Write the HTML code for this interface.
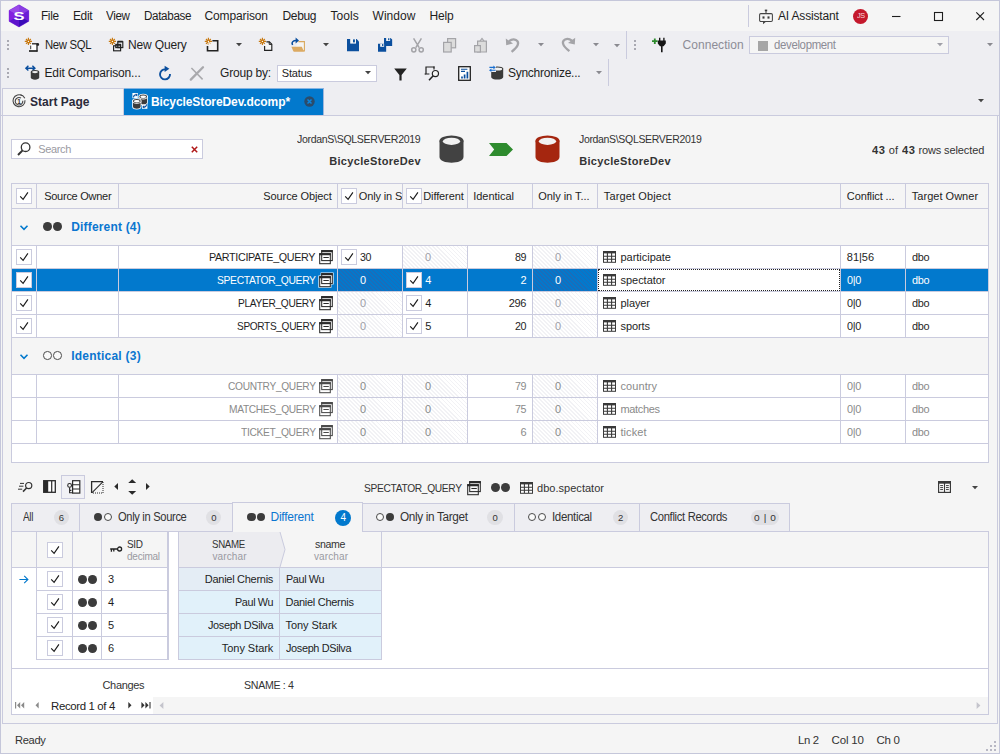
<!DOCTYPE html>
<html lang="en"><head><meta charset="utf-8"><title>BicycleStoreDev.dcomp - dbForge</title>
<style>
html,body{margin:0;padding:0;}
body{width:1000px;height:754px;position:relative;overflow:hidden;background:#f5f5f5;
font-family:"Liberation Sans",sans-serif;font-size:12px;}
body>div,body>svg,body>span{position:absolute;box-sizing:border-box;}
.t{white-space:pre;display:block;}
svg{overflow:visible;}
</style></head>
<body>
<div style="left:0px;top:0px;width:1000px;height:754px;background:#f5f5f5;border:1px solid #c5c7da;"></div>
<div style="left:1px;top:1px;width:998px;height:30px;background:#f5f5f5;"></div>
<div style="left:1px;top:31px;width:998px;height:85px;background:#eeeef2;"></div>
<svg style="left:8px;top:4px;" width="22" height="24" viewBox="0 0 22 24"><g transform="translate(-8 -4)">
<path d="M19 4.8 L28.8 10.4 V21.3 L19 27 L9 21.3 V10.4 Z" fill="#7426da"/><path d="M19 4.8 L9 10.4 L19 16 Z" fill="#9a48e8"/><path d="M19 4.8 L28.8 10.4 L19 16 Z" fill="#8a3ee2"/>
<path d="M9 10.4 L9 21.3 L19 16 Z" fill="#8420e0"/><path d="M28.8 10.4 L28.8 21.3 L19 16 Z" fill="#6a1cd6"/>
<path d="M9 21.3 L19 27 L19 16 Z" fill="#5c12cc"/><path d="M28.8 21.3 L19 27 L19 16 Z" fill="#3a0cb8"/>
<path d="M19 4.8 L28.8 10.4 V21.3 L19 27 L9 21.3 V10.4 Z" fill="none" stroke="#7a2adc" stroke-width=".6" opacity=".6"/>
<text x="0" y="0" font-size="11.6" font-weight="700" fill="#fff" text-anchor="middle" transform="translate(19 20.2) scale(1.42 1)" font-family="Liberation Sans, sans-serif">S</text></g></svg>
<span class="t" style="top:8px;font-size:12px;line-height:16px;color:#1e1e1e;letter-spacing:-0.35px;left:41.2px;transform:scaleX(0.984);transform-origin:0 50%;">File</span>
<span class="t" style="top:8px;font-size:12px;line-height:16px;color:#1e1e1e;letter-spacing:-0.35px;left:72.5px;transform:scaleX(0.993);transform-origin:0 50%;">Edit</span>
<span class="t" style="top:8px;font-size:12px;line-height:16px;color:#1e1e1e;letter-spacing:-0.35px;left:105.5px;transform:scaleX(0.970);transform-origin:0 50%;">View</span>
<span class="t" style="top:8px;font-size:12px;line-height:16px;color:#1e1e1e;letter-spacing:-0.35px;left:143.8px;transform:scaleX(0.971);transform-origin:0 50%;">Database</span>
<span class="t" style="top:8px;font-size:12px;line-height:16px;color:#1e1e1e;letter-spacing:-0.13px;left:204.5px;">Comparison</span>
<span class="t" style="top:8px;font-size:12px;line-height:16px;color:#1e1e1e;letter-spacing:-0.34px;left:282.5px;">Debug</span>
<span class="t" style="top:8px;font-size:12px;line-height:16px;color:#1e1e1e;letter-spacing:0.05px;left:330.5px;">Tools</span>
<span class="t" style="top:8px;font-size:12px;line-height:16px;color:#1e1e1e;letter-spacing:0.06px;left:372.5px;">Window</span>
<span class="t" style="top:8px;font-size:12px;line-height:16px;color:#1e1e1e;letter-spacing:-0.16px;left:429.5px;">Help</span>
<div style="left:748px;top:5px;width:1px;height:22px;background:#cacbde;"></div>
<svg style="left:758px;top:9px;" width="16" height="15" viewBox="0 0 16 15"><g fill="none" stroke="#444" stroke-width="1.05">
<rect x="1.6" y="4.6" width="12.8" height="7.8" rx="1.2"/>
<path d="M8 4.6 V1.2 M5.5 12.4 L5.5 14.2 L7.6 12.4"/></g>
<rect x="4.5" y="7.4" width="2" height="2.2" fill="#3a3a3a"/><rect x="9.5" y="7.4" width="2" height="2.2" fill="#3a3a3a"/>
<rect x="6.8" y="0.6" width="2.4" height="1.6" fill="#3a3a3a"/></svg>
<span class="t" style="top:8px;font-size:12px;line-height:16px;color:#1e1e1e;letter-spacing:-0.17px;left:778.0px;">AI Assistant</span>
<div style="left:853.3px;top:8.6px;width:15.2px;height:15.2px;background:#c4182c;border-radius:50%;"></div>
<span class="t" style="top:8.3px;font-size:8px;line-height:16px;color:#f6d6da;letter-spacing:-0.35px;left:856.9px;transform:scaleX(0.912);transform-origin:0 50%;">JS</span>
<svg style="left:890px;top:8px;" width="100" height="16" viewBox="0 0 100 16"><g stroke="#1e1e1e" stroke-width="1.1" fill="none">
<path d="M2 8.5 H10.5"/><rect x="44.5" y="4.5" width="8" height="8"/>
<path d="M86.3 4.3 L94 12 M94 4.3 L86.3 12"/></g></svg>
<div style="left:7px;top:40px;width:2px;height:2px;background:#a9a9b2;"></div>
<div style="left:7px;top:44px;width:2px;height:2px;background:#a9a9b2;"></div>
<div style="left:7px;top:48px;width:2px;height:2px;background:#a9a9b2;"></div>
<div style="left:7px;top:68px;width:2px;height:2px;background:#a9a9b2;"></div>
<div style="left:7px;top:72px;width:2px;height:2px;background:#a9a9b2;"></div>
<div style="left:7px;top:76px;width:2px;height:2px;background:#a9a9b2;"></div>
<svg style="left:25px;top:37px;" width="15" height="16" viewBox="0 0 15 16"><g stroke="#c8780f" stroke-width="1.15" stroke-linecap="butt"><path d="M3.4 0.8 V8 M-0.2 4.4 H7 M1 2 L5.8 6.8 M5.8 2 L1 6.8"/></g><circle cx="3.4" cy="4.4" r="0.65" fill="#fff"/><path d="M5.6 7 H12 V14.4 H5.6 Z" fill="#fff"/>
<path d="M7 6.8 H13.2" stroke="#222" stroke-width="1.3"/><rect x="11.6" y="6.2" width="2.5" height="2.5" rx=".8" fill="#222"/>
<path d="M12 7 V14.4" stroke="#222" stroke-width="1.3"/><path d="M4 14 H12.6" stroke="#222" stroke-width="1.7"/>
<path d="M5.7 8.6 V12.2" stroke="#222" stroke-width=".9"/></svg>
<span class="t" style="top:37px;font-size:12px;line-height:16px;color:#1e1e1e;letter-spacing:-0.35px;left:44.5px;transform:scaleX(0.944);transform-origin:0 50%;">New SQL</span>
<svg style="left:109px;top:37px;" width="15" height="16" viewBox="0 0 15 16"><g stroke="#c8780f" stroke-width="1.15" stroke-linecap="butt"><path d="M3.4 0.8 V8 M-0.2 4.4 H7 M1 2 L5.8 6.8 M5.8 2 L1 6.8"/></g><circle cx="3.4" cy="4.4" r="0.65" fill="#fff"/><g fill="none" stroke="#222" stroke-width="1.15"><rect x="8.8" y="4.8" width="5" height="5.8"/><rect x="6.8" y="7.4" width="4.8" height="3.2"/><rect x="4.6" y="8.8" width="7" height="5"/></g>
<path d="M8.6 4.5 H13.8" stroke="#222" stroke-width="1.5"/></svg>
<span class="t" style="top:37px;font-size:12px;line-height:16px;color:#1e1e1e;letter-spacing:-0.15px;left:128.0px;">New Query</span>
<svg style="left:204.5px;top:37px;" width="15" height="16" viewBox="0 0 15 16"><g stroke="#c8780f" stroke-width="1.15" stroke-linecap="butt"><path d="M3.4 0.8 V8 M-0.2 4.4 H7 M1 2 L5.8 6.8 M5.8 2 L1 6.8"/></g><circle cx="3.4" cy="4.4" r="0.65" fill="#fff"/><rect x="3" y="5" width="10" height="9" fill="#f5f5f5" opacity=".6"/><path d="M7.4 3.8 H12.7 V13.8 H2.5 V9" fill="none" stroke="#222" stroke-width="1.6"/></svg>
<svg style="left:235.8px;top:43px;" width="6" height="4" viewBox="0 0 6 4"><path d="M0 0 H6 L3 3.2 Z" fill="#444"/></svg>
<svg style="left:259px;top:37px;" width="15" height="16" viewBox="0 0 15 16"><g stroke="#c8780f" stroke-width="1.15" stroke-linecap="butt"><path d="M3.4 0.8 V8 M-0.2 4.4 H7 M1 2 L5.8 6.8 M5.8 2 L1 6.8"/></g><circle cx="3.4" cy="4.4" r="0.65" fill="#fff"/><path d="M7.4 4.8 H10.4 L12.8 7.2 V13.4 H5.6 V9" fill="#f5f5f5" stroke="#222" stroke-width="1.15"/><path d="M10.2 4.8 V7.4 H12.8" fill="none" stroke="#222" stroke-width="1"/></svg>
<svg style="left:291px;top:37px;" width="15" height="16" viewBox="0 0 15 16"><path d="M7.4 4.6 H13.4 V13.9 H3" fill="#f5f5f5" stroke="#d9a85e" stroke-width="1.1"/>
<path d="M0.4 9.8 H10.8 L13 14.4 H2.4 Z" fill="#dcaa62"/>
<path d="M1.6 8 C0 5 2.6 3.2 6 3.6" fill="none" stroke="#0b4f9e" stroke-width="1.5"/><path d="M4.6 0.6 L8 3.6 L4.6 6.4 Z" fill="#0b4f9e"/></svg>
<svg style="left:322.5px;top:43px;" width="6" height="4" viewBox="0 0 6 4"><path d="M0 0 H6 L3 3.2 Z" fill="#444"/></svg>
<svg style="left:347px;top:38.8px;" width="12" height="12.2" viewBox="0 0 12 12.2"><path d="M0 0 H9.6 L12 2.4 V12.2 H0 Z" fill="#0b4f9e"/><rect x="3.2" y="0" width="5.8" height="4.6" fill="#f5f5f5"/><rect x="6" y="0.4" width="1.9" height="3" fill="#0b4f9e"/></svg>
<svg style="left:378px;top:38px;" width="15" height="14" viewBox="0 0 15 14"><g transform="translate(6 0) scale(.68 .65)"><path d="M0 0 H9.6 L12 2.4 V12.2 H0 Z" fill="#0b4f9e"/><rect x="3.2" y="0" width="5.8" height="4.6" fill="#f5f5f5"/><rect x="6" y="0.4" width="1.9" height="3" fill="#0b4f9e"/></g><g transform="translate(0 5.8) scale(.68 .65)"><path d="M0 0 H9.6 L12 2.4 V12.2 H0 Z" fill="#0b4f9e"/><rect x="3.2" y="0" width="5.8" height="4.6" fill="#f5f5f5"/><rect x="6" y="0.4" width="1.9" height="3" fill="#0b4f9e"/></g></svg>
<svg style="left:410.5px;top:37.5px;" width="13" height="15" viewBox="0 0 13 15"><g fill="none" stroke="#a4a4a8" stroke-width="1.5"><path d="M2.6 0.4 L8.2 9.6 M10.4 0.4 L4.8 9.6"/><circle cx="2.8" cy="11.8" r="2.1"/><circle cx="10.2" cy="11.8" r="2.1"/></g></svg>
<svg style="left:442.5px;top:38px;" width="14" height="15" viewBox="0 0 14 15"><g fill="#dcdcdc" stroke="#a4a4a8" stroke-width="1.2"><rect x="4.6" y="0.6" width="8" height="9.2"/><rect x="0.6" y="4.4" width="7.6" height="9.6"/></g></svg>
<svg style="left:473.5px;top:37px;" width="14" height="16" viewBox="0 0 14 16"><g fill="#dcdcdc" stroke="#a4a4a8" stroke-width="1.2"><path d="M3.6 4.2 H12.4 V15 H3.6 Z"/><path d="M6 4 L8 1.4 L10 4" fill="none"/><rect x="0.6" y="8.6" width="5.8" height="6.4"/></g></svg>
<svg style="left:505px;top:37.5px;" width="15" height="15" viewBox="0 0 15 15"><path d="M4 3.2 C9 -0.6 14.6 2.6 12.6 7.2 C11.6 9.6 9 11.8 6.6 13.8" fill="none" stroke="#a4a4a8" stroke-width="2.3"/><path d="M0.8 0.4 L1.2 7.2 L8 5.6 Z" fill="#a4a4a8"/></svg>
<svg style="left:537.5px;top:43px;" width="6" height="4" viewBox="0 0 6 4"><path d="M0 0 H6 L3 3.2 Z" fill="#8a8a90"/></svg>
<svg style="left:561px;top:37px;" width="15" height="15" viewBox="0 0 15 15"><path d="M11 3.6 C6 -0.2 0.4 3 2.4 7.6 C3.4 10 6 12.2 8.4 14.2" fill="none" stroke="#a4a4a8" stroke-width="2.3"/><path d="M14.2 0.8 L13.8 7.6 L7 6 Z" fill="#a4a4a8"/></svg>
<svg style="left:592.8px;top:43px;" width="6" height="4" viewBox="0 0 6 4"><path d="M0 0 H6 L3 3.2 Z" fill="#8a8a90"/></svg>
<svg style="left:614px;top:44px;" width="6" height="4" viewBox="0 0 6 4"><path d="M0 0 H6 L3 3.2 Z" fill="#8a8a90"/></svg>
<div style="left:626px;top:31px;width:1px;height:28px;background:#cacbde;"></div>
<div style="left:634px;top:40px;width:2px;height:2px;background:#a9a9b2;"></div>
<div style="left:634px;top:44px;width:2px;height:2px;background:#a9a9b2;"></div>
<div style="left:634px;top:48px;width:2px;height:2px;background:#a9a9b2;"></div>
<svg style="left:652px;top:37px;" width="15" height="16" viewBox="0 0 15 16"><path d="M2.8 1.4 V7 M0 4.2 H5.6" stroke="#2e8b2e" stroke-width="1.8"/>
<path d="M7.7 0.8 V4 M11.9 0.8 V4" stroke="#161616" stroke-width="1.35"/><path d="M5.8 3.5 H13.8 V6.4 L11.6 9.2 H10.6 V15.2 H9 V9.2 H8 L5.8 6.4 Z" fill="#161616"/></svg>
<span class="t" style="top:37px;font-size:12px;line-height:16px;color:#8c8c96;letter-spacing:0.05px;left:682.5px;">Connection</span>
<div style="left:749px;top:36px;width:200px;height:18px;background:#f5f5f5;border:1px solid #cacbde;"></div>
<div style="left:757.5px;top:41px;width:10px;height:10px;background:#a6a6a6;"></div>
<span class="t" style="top:37px;font-size:12px;line-height:16px;color:#8c8c96;letter-spacing:-0.35px;left:773.8px;transform:scaleX(0.951);transform-origin:0 50%;">development</span>
<svg style="left:937px;top:43px;" width="6" height="4" viewBox="0 0 6 4"><path d="M0 0 H6 L3 3.2 Z" fill="#a0a0a8"/></svg>
<svg style="left:987px;top:43px;" width="6" height="4" viewBox="0 0 6 4"><path d="M0 0 H6 L3 3.2 Z" fill="#8a8a90"/></svg>
<svg style="left:25px;top:65px;" width="15" height="16" viewBox="0 0 15 16"><path d="M1.2 3.2 H9.6 M3.4 0.8 L0.9 3.2 L3.4 5.6 M7.4 0.8 L9.9 3.2 L7.4 5.6" fill="none" stroke="#0b4f9e" stroke-width="1.45"/>
<path d="M5.8 6.8 V12.6 C5.8 15.4 14.2 15.4 14.2 12.6 V6.8 Z" fill="#3a3a3a"/><ellipse cx="10" cy="6.9" rx="4.2" ry="2" fill="#3a3a3a"/><ellipse cx="10" cy="7.1" rx="3" ry="1.15" fill="#f0f0f0"/></svg>
<span class="t" style="top:65px;font-size:12px;line-height:16px;color:#1e1e1e;letter-spacing:-0.14px;left:44.5px;">Edit Comparison...</span>
<svg style="left:158px;top:65px;" width="14" height="16" viewBox="0 0 14 16"><path d="M7.6 4.4 A5 5 0 1 0 12 9" fill="none" stroke="#0b4f9e" stroke-width="1.9"/><path d="M6.6 0.8 L11.4 3.8 L6.6 7 Z" fill="#0b4f9e"/></svg>
<svg style="left:189px;top:66px;" width="15" height="15" viewBox="0 0 15 15"><path d="M2.4 2 L13.6 13.4" stroke="#a8a8ac" stroke-width="1.5"/><path d="M14 1.2 L1.8 13.6" stroke="#a8a8ac" stroke-width="2.3" stroke-linecap="round"/></svg>
<span class="t" style="top:65px;font-size:12px;line-height:16px;color:#1e1e1e;letter-spacing:-0.19px;left:220.0px;">Group by:</span>
<div style="left:277px;top:65px;width:100px;height:17px;background:#fff;border:1px solid #cacbde;"></div>
<span class="t" style="top:65px;font-size:11px;line-height:16px;color:#1e1e1e;letter-spacing:-0.18px;left:281.8px;">Status</span>
<svg style="left:365px;top:71px;" width="6" height="4" viewBox="0 0 6 4"><path d="M0 0 H6 L3 3.2 Z" fill="#444"/></svg>
<svg style="left:393.5px;top:67.5px;" width="13" height="13" viewBox="0 0 13 13"><path d="M0.2 0.6 H12.8 L7.6 7 V12.6 H5.4 V7 Z" fill="#222"/></svg>
<svg style="left:424px;top:65.5px;" width="16" height="15" viewBox="0 0 16 15"><path d="M6.4 1 H2 V8 H5.4 M10 3.6 V1 H6.4" fill="none" stroke="#222" stroke-width="1.2"/><path d="M2 8 H0.6 M9.4 1 H10.6" stroke="#222" stroke-width="1.2"/><circle cx="11.4" cy="7.6" r="3.1" fill="#f5f5f5" stroke="#222" stroke-width="1.2"/><path d="M9.2 9.8 L5 14.2" stroke="#222" stroke-width="1.5"/></svg>
<svg style="left:457.5px;top:65.5px;" width="13" height="15" viewBox="0 0 13 15"><rect x="0.7" y="0.7" width="11.6" height="13.6" fill="#fff" stroke="#222" stroke-width="1.3"/><path d="M3 3.2 H9.4 M3 5.4 H7" stroke="#0b4f9e" stroke-width="1.1"/><path d="M4 12.6 V10.6 M6.6 12.6 V8.6 M9.4 12.6 V5.8" stroke="#0b4f9e" stroke-width="1.7"/></svg>
<svg style="left:489px;top:65px;" width="15" height="16" viewBox="0 0 15 16"><path d="M2.2 3.6 V12 C2.2 15.4 14.2 15.4 14.2 12 V3.6 Z" fill="#3a3a3a"/><ellipse cx="8.2" cy="3.8" rx="6" ry="2.4" fill="#3a3a3a"/><ellipse cx="8.6" cy="4" rx="4.6" ry="1.5" fill="#f0f0f0"/>
<rect x="-0.6" y="0.6" width="7.6" height="6.4" fill="#eeeef2"/><path d="M0.4 2.4 H5 M2 5.2 H6.6" stroke="#1a6fd0" stroke-width="1.1"/><path d="M6.8 2.4 L4.4 0.6 V4.2 Z M0 5.2 L2.4 3.4 V7 Z" fill="#1a6fd0"/></svg>
<span class="t" style="top:65px;font-size:12px;line-height:16px;color:#1e1e1e;letter-spacing:-0.27px;left:508.0px;">Synchronize...</span>
<svg style="left:596px;top:71px;" width="6" height="4" viewBox="0 0 6 4"><path d="M0 0 H6 L3 3.2 Z" fill="#8a8a90"/></svg>
<div style="left:608px;top:59px;width:1px;height:27px;background:#cacbde;"></div>
<div style="left:1px;top:115px;width:998px;height:1px;background:#cacbde;"></div>
<div style="left:2px;top:88px;width:122px;height:28px;background:#f5f5f5;border:1px solid #cacbde;border-bottom:none;"></div>
<svg style="left:12px;top:94px;" width="14" height="14" viewBox="0 0 14 14"><g fill="none" stroke="#444" stroke-width="1.1"><path d="M10.6 1.9 A6 6 0 1 0 13 6.2"/><path d="M9 4 A3.8 3.8 0 1 0 10.8 6.8"/><path d="M8.4 0.8 A6.4 6.4 0 0 1 12.8 4.2"/></g>
<text x="7" y="9.6" font-size="6.5" font-weight="700" text-anchor="middle" fill="#333" font-family="Liberation Sans, sans-serif">1</text></svg>
<span class="t" style="top:94px;font-size:12px;line-height:16px;color:#2a2a3a;font-weight:700;letter-spacing:0.02px;left:30.0px;">Start Page</span>
<div style="left:124px;top:88px;width:200px;height:28px;background:#0279cd;border-top:1px solid #86b4e2;border-right:1px solid #9fb6dc;"></div>
<svg style="left:132px;top:92px;" width="16" height="18" viewBox="0 0 16 18"><rect x="0.4" y="1" width="5.4" height="5.2" fill="#fff"/><rect x="10" y="11.6" width="5.4" height="5.2" fill="#fff"/>
<g transform="translate(7.4 2.4)"><path d="M0 2.2 V8 C0 10.6 7.6 10.6 7.6 8 V2.2 Z" fill="#3c3c3c" stroke="#fff" stroke-width="1.6" paint-order="stroke"/><ellipse cx="3.8" cy="2.2" rx="3.8" ry="2" fill="#3c3c3c" stroke="#fff" stroke-width="1.6" paint-order="stroke"/><ellipse cx="3.8" cy="2.4" rx="2.9" ry="1.2" fill="#fff"/></g><g transform="translate(1 6.8)"><path d="M0 2.2 V8 C0 10.6 7.6 10.6 7.6 8 V2.2 Z" fill="#3c3c3c" stroke="#fff" stroke-width="1.6" paint-order="stroke"/><ellipse cx="3.8" cy="2.2" rx="3.8" ry="2" fill="#3c3c3c" stroke="#fff" stroke-width="1.6" paint-order="stroke"/><ellipse cx="3.8" cy="2.4" rx="2.9" ry="1.2" fill="#fff"/></g>
<path d="M1.6 5.4 C1.4 3.4 3 2.6 4.4 2.8" fill="none" stroke="#0b4f9e" stroke-width="1.2"/><path d="M3.8 1.2 L5.8 2.9 L3.8 4.6 Z" fill="#0b4f9e"/>
<path d="M14.4 12.4 C14.6 14.4 13 15.2 11.6 15" fill="none" stroke="#0b4f9e" stroke-width="1.2"/><path d="M12.2 16.6 L10.2 14.9 L12.2 13.2 Z" fill="#0b4f9e"/></svg>
<span class="t" style="top:94px;font-size:12px;line-height:16px;color:#fff;font-weight:700;letter-spacing:-0.10px;left:151.0px;">BicycleStoreDev.dcomp*</span>
<svg style="left:303.5px;top:96.4px;" width="11" height="11" viewBox="0 0 11 11"><circle cx="5.5" cy="5.5" r="5.2" fill="#2b4c6b"/><path d="M3.5 3.5 L7.5 7.5 M7.5 3.5 L3.5 7.5" stroke="#0a86e0" stroke-width="1.5"/></svg>
<svg style="left:978px;top:99px;" width="6" height="4" viewBox="0 0 6 4"><path d="M0 0 H6 L3 3.2 Z" fill="#444"/></svg>
<div style="left:2px;top:115px;width:996px;height:609px;background:#f5f5f5;border:1px solid #cacbde;"></div>
<div style="left:11px;top:139px;width:192px;height:20px;background:#fff;border:1px solid #cacbde;"></div>
<svg style="left:16.5px;top:142px;" width="14" height="14" viewBox="0 0 14 14"><circle cx="8.6" cy="5.2" r="4.3" fill="none" stroke="#333" stroke-width="1.3"/><path d="M5.6 8.4 L1 13" stroke="#333" stroke-width="2"/></svg>
<span class="t" style="top:141px;font-size:11px;line-height:16px;color:#9a9aa2;letter-spacing:-0.35px;left:38.2px;">Search</span>
<svg style="left:190.5px;top:145.5px;" width="7" height="7" viewBox="0 0 7 7"><path d="M0.8 0.8 L6.2 6.2 M6.2 0.8 L0.8 6.2" stroke="#b01818" stroke-width="1.5"/></svg>
<span class="t" style="top:131px;font-size:11px;line-height:16px;color:#333;letter-spacing:-0.35px;left:296.8px;transform:scaleX(0.962);transform-origin:0 50%;">JordanS\SQLSERVER2019</span>
<span class="t" style="top:153px;font-size:11px;line-height:16px;color:#333;font-weight:700;letter-spacing:0.33px;left:329.2px;">BicycleStoreDev</span>
<span class="t" style="top:131px;font-size:11px;line-height:16px;color:#333;letter-spacing:-0.35px;left:579.2px;transform:scaleX(0.955);transform-origin:0 50%;">JordanS\SQLSERVER2019</span>
<span class="t" style="top:153px;font-size:11px;line-height:16px;color:#333;font-weight:700;letter-spacing:0.33px;left:579.2px;">BicycleStoreDev</span>
<svg style="left:439.2px;top:135px;" width="25" height="28" viewBox="0 0 25 28"><path d="M0.5 5.5 V22 C0.5 29.6 24.5 29.6 24.5 22 V5.5 Z" fill="#424242"/>
<ellipse cx="12.5" cy="6" rx="12" ry="5.6" fill="#424242"/><ellipse cx="12.5" cy="6.3" rx="8.6" ry="3.6" fill="#f1f1f1"/></svg>
<svg style="left:535.3px;top:135px;" width="25" height="28" viewBox="0 0 25 28"><path d="M0.5 5.5 V22 C0.5 29.6 24.5 29.6 24.5 22 V5.5 Z" fill="#a5260f"/>
<ellipse cx="12.5" cy="6" rx="12" ry="5.6" fill="#a5260f"/><ellipse cx="12.5" cy="6.3" rx="8.6" ry="3.6" fill="#f1f1f1"/></svg>
<svg style="left:489.3px;top:142.5px;" width="24" height="13" viewBox="0 0 24 13"><path d="M0 0 H17.5 L24 6.5 L17.5 13 H0 L5.2 6.5 Z" fill="#2e8b2e"/></svg>
<span class="t" style="top:142px;font-size:11px;line-height:16px;color:#333;font-weight:700;letter-spacing:0.60px;left:872.0px;transform:scaleX(1.012);transform-origin:0 50%;">43</span>
<span class="t" style="top:142px;font-size:11px;line-height:16px;color:#333;letter-spacing:0.21px;left:888.8px;">of</span>
<span class="t" style="top:142px;font-size:11px;line-height:16px;color:#333;font-weight:700;letter-spacing:0.60px;left:902.4px;transform:scaleX(1.012);transform-origin:0 50%;">43</span>
<span class="t" style="top:142px;font-size:11px;line-height:16px;color:#333;letter-spacing:-0.11px;left:918.4px;">rows selected</span>
<div style="left:11px;top:183px;width:978px;height:280px;background:#fff;border:1px solid #cacbde;"></div>
<div style="left:12px;top:184px;width:976px;height:24px;background:#f5f5f5;"></div>
<div style="left:36px;top:184px;width:1px;height:25px;background:#cacbde;"></div>
<div style="left:118px;top:184px;width:1px;height:25px;background:#cacbde;"></div>
<div style="left:337px;top:184px;width:1px;height:25px;background:#cacbde;"></div>
<div style="left:402px;top:184px;width:1px;height:25px;background:#cacbde;"></div>
<div style="left:467px;top:184px;width:1px;height:25px;background:#cacbde;"></div>
<div style="left:532px;top:184px;width:1px;height:25px;background:#cacbde;"></div>
<div style="left:597px;top:184px;width:1px;height:25px;background:#cacbde;"></div>
<div style="left:840px;top:184px;width:1px;height:25px;background:#cacbde;"></div>
<div style="left:905px;top:184px;width:1px;height:25px;background:#cacbde;"></div>
<div style="left:11px;top:208px;width:978px;height:1px;background:#cacbde;"></div>
<div style="left:16px;top:188px;width:16px;height:16px;background:#fff;border:1px solid #cacbde;"></div>
<svg style="left:19px;top:192px;" width="10" height="9" viewBox="0 0 10 9"><path d="M1.2 4.3 L4.1 7.3 L8.9 0.4" fill="none" stroke="#1a1a1a" stroke-width="1.15"/></svg>
<span class="t" style="top:188px;font-size:11px;line-height:16px;color:#1e1e1e;letter-spacing:-0.26px;left:44.2px;">Source Owner</span>
<span class="t" style="top:188px;font-size:11px;line-height:16px;color:#1e1e1e;letter-spacing:-0.10px;left:263.3px;">Source Object</span>
<div style="left:341px;top:188px;width:16px;height:16px;background:#fff;border:1px solid #cacbde;"></div>
<svg style="left:344px;top:192px;" width="10" height="9" viewBox="0 0 10 9"><path d="M1.2 4.3 L4.1 7.3 L8.9 0.4" fill="none" stroke="#1a1a1a" stroke-width="1.15"/></svg>
<div style="left:358px;top:186px;width:44px;height:20px;overflow:hidden;"><span class="t" style="position:absolute;left:0.8px;top:2px;line-height:16px;font-size:11px;color:#1e1e1e;letter-spacing:-0.15px">Only in Source</span></div>
<div style="left:406px;top:188px;width:16px;height:16px;background:#fff;border:1px solid #cacbde;"></div>
<svg style="left:409px;top:192px;" width="10" height="9" viewBox="0 0 10 9"><path d="M1.2 4.3 L4.1 7.3 L8.9 0.4" fill="none" stroke="#1a1a1a" stroke-width="1.15"/></svg>
<div style="left:422px;top:186px;width:45px;height:20px;overflow:hidden;"><span class="t" style="position:absolute;left:1.2px;top:2px;line-height:16px;font-size:11px;color:#1e1e1e;letter-spacing:-0.1px">Different</span></div>
<span class="t" style="top:188px;font-size:11px;line-height:16px;color:#1e1e1e;letter-spacing:-0.02px;left:473.2px;">Identical</span>
<span class="t" style="top:188px;font-size:11px;line-height:16px;color:#1e1e1e;letter-spacing:-0.04px;left:538.2px;">Only in T...</span>
<span class="t" style="top:188px;font-size:11px;line-height:16px;color:#1e1e1e;letter-spacing:0.13px;left:603.8px;">Target Object</span>
<span class="t" style="top:188px;font-size:11px;line-height:16px;color:#1e1e1e;letter-spacing:-0.11px;left:846.8px;">Conflict ...</span>
<span class="t" style="top:188px;font-size:11px;line-height:16px;color:#1e1e1e;letter-spacing:0.02px;left:911.8px;">Target Owner</span>
<div style="left:12px;top:209px;width:976px;height:36px;background:#f5f5f5;"></div>
<div style="left:11px;top:245px;width:978px;height:1px;background:#cacbde;"></div>
<svg style="left:20.3px;top:224.8px;" width="8" height="6" viewBox="0 0 8 6"><path d="M0.5 0.7 L4 4.4 L7.5 0.7" fill="none" stroke="#0279cd" stroke-width="1.55"/></svg>
<div style="left:43.1px;top:222.2px;width:8.8px;height:8.8px;background:#3c3c3c;border-radius:50%;"></div>
<div style="left:52.9px;top:222.2px;width:8.8px;height:8.8px;background:#3c3c3c;border-radius:50%;"></div>
<span class="t" style="top:218.7px;font-size:12px;line-height:16px;color:#0b76d0;font-weight:700;letter-spacing:0.18px;left:71.2px;">Different (4)</span>
<div style="left:11px;top:268px;width:978px;height:1px;background:#cacbde;"></div>
<div style="left:16px;top:249px;width:16px;height:16px;background:#fff;border:1px solid #cacbde;"></div>
<svg style="left:19px;top:253px;" width="10" height="9" viewBox="0 0 10 9"><path d="M1.2 4.3 L4.1 7.3 L8.9 0.4" fill="none" stroke="#1a1a1a" stroke-width="1.15"/></svg>
<span class="t" style="top:249px;font-size:11px;line-height:16px;color:#1e1e1e;letter-spacing:-0.35px;left:209.0px;transform:scaleX(0.978);transform-origin:0 50%;">PARTICIPATE_QUERY</span>
<svg style="left:319px;top:250px;" width="14" height="14" viewBox="0 0 14 14"><g fill="none" stroke="#2a2a2a" stroke-width="1.05"><rect x="2.7" y="0.6" width="10.6" height="10"/><rect x="0.7" y="3.7" width="10.6" height="10"/></g><path d="M2.2 1.2 H13.8 M0.2 4.3 H11.8" stroke="#2a2a2a" stroke-width="1.9"/><path d="M4.4 7.5 H9.8" stroke="#2a2a2a" stroke-width="1"/></svg>
<div style="left:341px;top:249px;width:16px;height:16px;background:#fff;border:1px solid #cacbde;"></div>
<svg style="left:344px;top:253px;" width="10" height="9" viewBox="0 0 10 9"><path d="M1.2 4.3 L4.1 7.3 L8.9 0.4" fill="none" stroke="#1a1a1a" stroke-width="1.15"/></svg>
<span class="t" style="top:249px;font-size:11px;line-height:16px;color:#1e1e1e;letter-spacing:-0.35px;left:360.3px;transform:scaleX(0.966);transform-origin:0 50%;">30</span>
<div style="left:403px;top:246px;width:64px;height:22px;background:repeating-linear-gradient(45deg,#fff 0,#fff 2.1px,#f2f2f5 2.1px,#f2f2f5 2.83px);"></div>
<span class="t" style="top:249px;font-size:11px;line-height:16px;color:#a0a0a8;left:425.0px;">0</span>
<span class="t" style="top:249px;font-size:11px;line-height:16px;color:#1e1e1e;letter-spacing:-0.35px;left:514.9px;transform:scaleX(0.975);transform-origin:0 50%;">89</span>
<div style="left:533px;top:246px;width:64px;height:22px;background:repeating-linear-gradient(45deg,#fff 0,#fff 2.1px,#f2f2f5 2.1px,#f2f2f5 2.83px);"></div>
<span class="t" style="top:249px;font-size:11px;line-height:16px;color:#a0a0a8;left:555.0px;">0</span>
<svg style="left:603px;top:251.2px;" width="13" height="12" viewBox="0 0 13 12"><rect x="0.5" y="0.5" width="12" height="10.8" fill="#fff" stroke="#3a3a3a" stroke-width="1"/><path d="M0 1.3 H13" stroke="#3a3a3a" stroke-width="2.2"/><path d="M0.5 5.2 H12.5 M0.5 8.2 H12.5 M4.4 1 V11 M8.6 1 V11" stroke="#3a3a3a" stroke-width="1.1"/></svg>
<span class="t" style="top:249px;font-size:11px;line-height:16px;color:#1e1e1e;letter-spacing:-0.03px;left:620.5px;">participate</span>
<span class="t" style="top:249px;font-size:11px;line-height:16px;color:#1e1e1e;letter-spacing:-0.03px;left:846.8px;">81|56</span>
<span class="t" style="top:249px;font-size:11px;line-height:16px;color:#1e1e1e;letter-spacing:-0.35px;left:911.8px;transform:scaleX(0.991);transform-origin:0 50%;">dbo</span>
<div style="left:12px;top:269px;width:976px;height:22px;background:#0279cd;"></div>
<div style="left:11px;top:291px;width:978px;height:1px;background:#cacbde;"></div>
<div style="left:16px;top:272px;width:16px;height:16px;background:#fff;border:1px solid #cacbde;"></div>
<svg style="left:19px;top:276px;" width="10" height="9" viewBox="0 0 10 9"><path d="M1.2 4.3 L4.1 7.3 L8.9 0.4" fill="none" stroke="#1a1a1a" stroke-width="1.15"/></svg>
<span class="t" style="top:272px;font-size:11px;line-height:16px;color:#fff;letter-spacing:-0.35px;left:216.5px;transform:scaleX(0.938);transform-origin:0 50%;">SPECTATOR_QUERY</span>
<svg style="left:319px;top:273px;" width="14" height="14" viewBox="0 0 14 14"><path d="M1.6 -0.6 H14.6 V11.6 H12.4 V14.8 H-0.6 V2.6 H1.6 Z" fill="#fff"/><g fill="none" stroke="#2a2a2a" stroke-width="1.05"><rect x="2.7" y="0.6" width="10.6" height="10"/><rect x="0.7" y="3.7" width="10.6" height="10"/></g><path d="M2.2 1.2 H13.8 M0.2 4.3 H11.8" stroke="#2a2a2a" stroke-width="1.9"/><path d="M4.4 7.5 H9.8" stroke="#2a2a2a" stroke-width="1"/></svg>
<div style="left:338px;top:269px;width:64px;height:22px;background:repeating-linear-gradient(45deg,#0279cd 0,#0279cd 2.1px,#1a6dba 2.1px,#1a6dba 2.83px);"></div>
<span class="t" style="top:272px;font-size:11px;line-height:16px;color:#fff;left:360.0px;">0</span>
<div style="left:406px;top:272px;width:16px;height:16px;background:#fff;border:1px solid #cacbde;"></div>
<svg style="left:409px;top:276px;" width="10" height="9" viewBox="0 0 10 9"><path d="M1.2 4.3 L4.1 7.3 L8.9 0.4" fill="none" stroke="#1a1a1a" stroke-width="1.15"/></svg>
<span class="t" style="top:272px;font-size:11px;line-height:16px;color:#fff;left:425.3px;">4</span>
<span class="t" style="top:272px;font-size:11px;line-height:16px;color:#fff;left:520.4px;">2</span>
<div style="left:533px;top:269px;width:64px;height:22px;background:repeating-linear-gradient(45deg,#0279cd 0,#0279cd 2.1px,#1a6dba 2.1px,#1a6dba 2.83px);"></div>
<span class="t" style="top:272px;font-size:11px;line-height:16px;color:#fff;left:555.0px;">0</span>
<div style="left:598px;top:269px;width:242px;height:22px;background:#fff;border:1px dotted #222;"></div>
<svg style="left:603px;top:274.2px;" width="13" height="12" viewBox="0 0 13 12"><rect x="0.5" y="0.5" width="12" height="10.8" fill="#fff" stroke="#3a3a3a" stroke-width="1"/><path d="M0 1.3 H13" stroke="#3a3a3a" stroke-width="2.2"/><path d="M0.5 5.2 H12.5 M0.5 8.2 H12.5 M4.4 1 V11 M8.6 1 V11" stroke="#3a3a3a" stroke-width="1.1"/></svg>
<span class="t" style="top:272px;font-size:11px;line-height:16px;color:#1e1e1e;letter-spacing:-0.03px;left:620.5px;">spectator</span>
<span class="t" style="top:272px;font-size:11px;line-height:16px;color:#fff;letter-spacing:-0.35px;left:846.8px;transform:scaleX(0.987);transform-origin:0 50%;">0|0</span>
<span class="t" style="top:272px;font-size:11px;line-height:16px;color:#fff;letter-spacing:-0.35px;left:911.8px;transform:scaleX(0.991);transform-origin:0 50%;">dbo</span>
<div style="left:11px;top:314px;width:978px;height:1px;background:#cacbde;"></div>
<div style="left:16px;top:295px;width:16px;height:16px;background:#fff;border:1px solid #cacbde;"></div>
<svg style="left:19px;top:299px;" width="10" height="9" viewBox="0 0 10 9"><path d="M1.2 4.3 L4.1 7.3 L8.9 0.4" fill="none" stroke="#1a1a1a" stroke-width="1.15"/></svg>
<span class="t" style="top:295px;font-size:11px;line-height:16px;color:#1e1e1e;letter-spacing:-0.35px;left:238.0px;transform:scaleX(0.925);transform-origin:0 50%;">PLAYER_QUERY</span>
<svg style="left:319px;top:296px;" width="14" height="14" viewBox="0 0 14 14"><g fill="none" stroke="#2a2a2a" stroke-width="1.05"><rect x="2.7" y="0.6" width="10.6" height="10"/><rect x="0.7" y="3.7" width="10.6" height="10"/></g><path d="M2.2 1.2 H13.8 M0.2 4.3 H11.8" stroke="#2a2a2a" stroke-width="1.9"/><path d="M4.4 7.5 H9.8" stroke="#2a2a2a" stroke-width="1"/></svg>
<div style="left:338px;top:292px;width:64px;height:22px;background:repeating-linear-gradient(45deg,#fff 0,#fff 2.1px,#f2f2f5 2.1px,#f2f2f5 2.83px);"></div>
<span class="t" style="top:295px;font-size:11px;line-height:16px;color:#a0a0a8;left:360.0px;">0</span>
<div style="left:406px;top:295px;width:16px;height:16px;background:#fff;border:1px solid #cacbde;"></div>
<svg style="left:409px;top:299px;" width="10" height="9" viewBox="0 0 10 9"><path d="M1.2 4.3 L4.1 7.3 L8.9 0.4" fill="none" stroke="#1a1a1a" stroke-width="1.15"/></svg>
<span class="t" style="top:295px;font-size:11px;line-height:16px;color:#1e1e1e;left:425.3px;">4</span>
<span class="t" style="top:295px;font-size:11px;line-height:16px;color:#1e1e1e;letter-spacing:-0.33px;left:508.8px;">296</span>
<div style="left:533px;top:292px;width:64px;height:22px;background:repeating-linear-gradient(45deg,#fff 0,#fff 2.1px,#f2f2f5 2.1px,#f2f2f5 2.83px);"></div>
<span class="t" style="top:295px;font-size:11px;line-height:16px;color:#a0a0a8;left:555.0px;">0</span>
<svg style="left:603px;top:297.2px;" width="13" height="12" viewBox="0 0 13 12"><rect x="0.5" y="0.5" width="12" height="10.8" fill="#fff" stroke="#3a3a3a" stroke-width="1"/><path d="M0 1.3 H13" stroke="#3a3a3a" stroke-width="2.2"/><path d="M0.5 5.2 H12.5 M0.5 8.2 H12.5 M4.4 1 V11 M8.6 1 V11" stroke="#3a3a3a" stroke-width="1.1"/></svg>
<span class="t" style="top:295px;font-size:11px;line-height:16px;color:#1e1e1e;letter-spacing:-0.09px;left:620.5px;">player</span>
<span class="t" style="top:295px;font-size:11px;line-height:16px;color:#1e1e1e;letter-spacing:-0.35px;left:846.8px;transform:scaleX(0.987);transform-origin:0 50%;">0|0</span>
<span class="t" style="top:295px;font-size:11px;line-height:16px;color:#1e1e1e;letter-spacing:-0.35px;left:911.8px;transform:scaleX(0.991);transform-origin:0 50%;">dbo</span>
<div style="left:11px;top:337px;width:978px;height:1px;background:#cacbde;"></div>
<div style="left:16px;top:318px;width:16px;height:16px;background:#fff;border:1px solid #cacbde;"></div>
<svg style="left:19px;top:322px;" width="10" height="9" viewBox="0 0 10 9"><path d="M1.2 4.3 L4.1 7.3 L8.9 0.4" fill="none" stroke="#1a1a1a" stroke-width="1.15"/></svg>
<span class="t" style="top:318px;font-size:11px;line-height:16px;color:#1e1e1e;letter-spacing:-0.35px;left:236.5px;transform:scaleX(0.916);transform-origin:0 50%;">SPORTS_QUERY</span>
<svg style="left:319px;top:319px;" width="14" height="14" viewBox="0 0 14 14"><g fill="none" stroke="#2a2a2a" stroke-width="1.05"><rect x="2.7" y="0.6" width="10.6" height="10"/><rect x="0.7" y="3.7" width="10.6" height="10"/></g><path d="M2.2 1.2 H13.8 M0.2 4.3 H11.8" stroke="#2a2a2a" stroke-width="1.9"/><path d="M4.4 7.5 H9.8" stroke="#2a2a2a" stroke-width="1"/></svg>
<div style="left:338px;top:315px;width:64px;height:22px;background:repeating-linear-gradient(45deg,#fff 0,#fff 2.1px,#f2f2f5 2.1px,#f2f2f5 2.83px);"></div>
<span class="t" style="top:318px;font-size:11px;line-height:16px;color:#a0a0a8;left:360.0px;">0</span>
<div style="left:406px;top:318px;width:16px;height:16px;background:#fff;border:1px solid #cacbde;"></div>
<svg style="left:409px;top:322px;" width="10" height="9" viewBox="0 0 10 9"><path d="M1.2 4.3 L4.1 7.3 L8.9 0.4" fill="none" stroke="#1a1a1a" stroke-width="1.15"/></svg>
<span class="t" style="top:318px;font-size:11px;line-height:16px;color:#1e1e1e;left:425.3px;">5</span>
<span class="t" style="top:318px;font-size:11px;line-height:16px;color:#1e1e1e;letter-spacing:-0.35px;left:514.9px;transform:scaleX(0.975);transform-origin:0 50%;">20</span>
<div style="left:533px;top:315px;width:64px;height:22px;background:repeating-linear-gradient(45deg,#fff 0,#fff 2.1px,#f2f2f5 2.1px,#f2f2f5 2.83px);"></div>
<span class="t" style="top:318px;font-size:11px;line-height:16px;color:#a0a0a8;left:555.0px;">0</span>
<svg style="left:603px;top:320.2px;" width="13" height="12" viewBox="0 0 13 12"><rect x="0.5" y="0.5" width="12" height="10.8" fill="#fff" stroke="#3a3a3a" stroke-width="1"/><path d="M0 1.3 H13" stroke="#3a3a3a" stroke-width="2.2"/><path d="M0.5 5.2 H12.5 M0.5 8.2 H12.5 M4.4 1 V11 M8.6 1 V11" stroke="#3a3a3a" stroke-width="1.1"/></svg>
<span class="t" style="top:318px;font-size:11px;line-height:16px;color:#1e1e1e;letter-spacing:-0.09px;left:620.5px;">sports</span>
<span class="t" style="top:318px;font-size:11px;line-height:16px;color:#1e1e1e;letter-spacing:-0.35px;left:846.8px;transform:scaleX(0.987);transform-origin:0 50%;">0|0</span>
<span class="t" style="top:318px;font-size:11px;line-height:16px;color:#1e1e1e;letter-spacing:-0.35px;left:911.8px;transform:scaleX(0.991);transform-origin:0 50%;">dbo</span>
<div style="left:12px;top:338px;width:976px;height:36px;background:#f5f5f5;"></div>
<div style="left:11px;top:374px;width:978px;height:1px;background:#cacbde;"></div>
<svg style="left:20.3px;top:353.8px;" width="8" height="6" viewBox="0 0 8 6"><path d="M0.5 0.7 L4 4.4 L7.5 0.7" fill="none" stroke="#0279cd" stroke-width="1.55"/></svg>
<div style="left:43.2px;top:351.2px;width:8.6px;height:8.6px;background:#fafafa;border:1.1px solid #4a4a4a;border-radius:50%;"></div>
<div style="left:53.0px;top:351.2px;width:8.6px;height:8.6px;background:#fafafa;border:1.1px solid #4a4a4a;border-radius:50%;"></div>
<span class="t" style="top:347.7px;font-size:12px;line-height:16px;color:#0b76d0;font-weight:700;letter-spacing:0.23px;left:71.2px;">Identical (3)</span>
<div style="left:11px;top:397px;width:978px;height:1px;background:#cacbde;"></div>
<span class="t" style="top:378px;font-size:11px;line-height:16px;color:#8a8a8a;letter-spacing:-0.35px;left:227.5px;transform:scaleX(0.926);transform-origin:0 50%;">COUNTRY_QUERY</span>
<svg style="left:319px;top:379px;" width="14" height="14" viewBox="0 0 14 14"><g fill="none" stroke="#4a4a4a" stroke-width="1.05"><rect x="2.7" y="0.6" width="10.6" height="10"/><rect x="0.7" y="3.7" width="10.6" height="10"/></g><path d="M2.2 1.2 H13.8 M0.2 4.3 H11.8" stroke="#4a4a4a" stroke-width="1.9"/><path d="M4.4 7.5 H9.8" stroke="#4a4a4a" stroke-width="1"/></svg>
<div style="left:338px;top:375px;width:64px;height:22px;background:repeating-linear-gradient(45deg,#fff 0,#fff 2.1px,#f2f2f5 2.1px,#f2f2f5 2.83px);"></div>
<span class="t" style="top:378px;font-size:11px;line-height:16px;color:#8a8a8a;left:360.0px;">0</span>
<div style="left:403px;top:375px;width:64px;height:22px;background:repeating-linear-gradient(45deg,#fff 0,#fff 2.1px,#f2f2f5 2.1px,#f2f2f5 2.83px);"></div>
<span class="t" style="top:378px;font-size:11px;line-height:16px;color:#8a8a8a;left:425.0px;">0</span>
<span class="t" style="top:378px;font-size:11px;line-height:16px;color:#8a8a8a;letter-spacing:-0.35px;left:514.9px;transform:scaleX(0.975);transform-origin:0 50%;">79</span>
<div style="left:533px;top:375px;width:64px;height:22px;background:repeating-linear-gradient(45deg,#fff 0,#fff 2.1px,#f2f2f5 2.1px,#f2f2f5 2.83px);"></div>
<span class="t" style="top:378px;font-size:11px;line-height:16px;color:#8a8a8a;left:555.0px;">0</span>
<svg style="left:603px;top:380.2px;" width="13" height="12" viewBox="0 0 13 12"><rect x="0.5" y="0.5" width="12" height="10.8" fill="#fff" stroke="#3a3a3a" stroke-width="1"/><path d="M0 1.3 H13" stroke="#3a3a3a" stroke-width="2.2"/><path d="M0.5 5.2 H12.5 M0.5 8.2 H12.5 M4.4 1 V11 M8.6 1 V11" stroke="#3a3a3a" stroke-width="1.1"/></svg>
<span class="t" style="top:378px;font-size:11px;line-height:16px;color:#8a8a8a;letter-spacing:0.07px;left:620.5px;">country</span>
<span class="t" style="top:378px;font-size:11px;line-height:16px;color:#8a8a8a;letter-spacing:-0.35px;left:846.8px;transform:scaleX(0.987);transform-origin:0 50%;">0|0</span>
<span class="t" style="top:378px;font-size:11px;line-height:16px;color:#8a8a8a;letter-spacing:-0.35px;left:911.8px;transform:scaleX(0.991);transform-origin:0 50%;">dbo</span>
<div style="left:11px;top:420px;width:978px;height:1px;background:#cacbde;"></div>
<span class="t" style="top:401px;font-size:11px;line-height:16px;color:#8a8a8a;letter-spacing:-0.35px;left:228.5px;transform:scaleX(0.927);transform-origin:0 50%;">MATCHES_QUERY</span>
<svg style="left:319px;top:402px;" width="14" height="14" viewBox="0 0 14 14"><g fill="none" stroke="#4a4a4a" stroke-width="1.05"><rect x="2.7" y="0.6" width="10.6" height="10"/><rect x="0.7" y="3.7" width="10.6" height="10"/></g><path d="M2.2 1.2 H13.8 M0.2 4.3 H11.8" stroke="#4a4a4a" stroke-width="1.9"/><path d="M4.4 7.5 H9.8" stroke="#4a4a4a" stroke-width="1"/></svg>
<div style="left:338px;top:398px;width:64px;height:22px;background:repeating-linear-gradient(45deg,#fff 0,#fff 2.1px,#f2f2f5 2.1px,#f2f2f5 2.83px);"></div>
<span class="t" style="top:401px;font-size:11px;line-height:16px;color:#8a8a8a;left:360.0px;">0</span>
<div style="left:403px;top:398px;width:64px;height:22px;background:repeating-linear-gradient(45deg,#fff 0,#fff 2.1px,#f2f2f5 2.1px,#f2f2f5 2.83px);"></div>
<span class="t" style="top:401px;font-size:11px;line-height:16px;color:#8a8a8a;left:425.0px;">0</span>
<span class="t" style="top:401px;font-size:11px;line-height:16px;color:#8a8a8a;letter-spacing:-0.35px;left:514.9px;transform:scaleX(0.975);transform-origin:0 50%;">75</span>
<div style="left:533px;top:398px;width:64px;height:22px;background:repeating-linear-gradient(45deg,#fff 0,#fff 2.1px,#f2f2f5 2.1px,#f2f2f5 2.83px);"></div>
<span class="t" style="top:401px;font-size:11px;line-height:16px;color:#8a8a8a;left:555.0px;">0</span>
<svg style="left:603px;top:403.2px;" width="13" height="12" viewBox="0 0 13 12"><rect x="0.5" y="0.5" width="12" height="10.8" fill="#fff" stroke="#3a3a3a" stroke-width="1"/><path d="M0 1.3 H13" stroke="#3a3a3a" stroke-width="2.2"/><path d="M0.5 5.2 H12.5 M0.5 8.2 H12.5 M4.4 1 V11 M8.6 1 V11" stroke="#3a3a3a" stroke-width="1.1"/></svg>
<span class="t" style="top:401px;font-size:11px;line-height:16px;color:#8a8a8a;letter-spacing:-0.35px;left:620.5px;">matches</span>
<span class="t" style="top:401px;font-size:11px;line-height:16px;color:#8a8a8a;letter-spacing:-0.35px;left:846.8px;transform:scaleX(0.987);transform-origin:0 50%;">0|0</span>
<span class="t" style="top:401px;font-size:11px;line-height:16px;color:#8a8a8a;letter-spacing:-0.35px;left:911.8px;transform:scaleX(0.991);transform-origin:0 50%;">dbo</span>
<div style="left:11px;top:443px;width:978px;height:1px;background:#cacbde;"></div>
<span class="t" style="top:424px;font-size:11px;line-height:16px;color:#8a8a8a;letter-spacing:-0.35px;left:240.5px;transform:scaleX(0.934);transform-origin:0 50%;">TICKET_QUERY</span>
<svg style="left:319px;top:425px;" width="14" height="14" viewBox="0 0 14 14"><g fill="none" stroke="#4a4a4a" stroke-width="1.05"><rect x="2.7" y="0.6" width="10.6" height="10"/><rect x="0.7" y="3.7" width="10.6" height="10"/></g><path d="M2.2 1.2 H13.8 M0.2 4.3 H11.8" stroke="#4a4a4a" stroke-width="1.9"/><path d="M4.4 7.5 H9.8" stroke="#4a4a4a" stroke-width="1"/></svg>
<div style="left:338px;top:421px;width:64px;height:22px;background:repeating-linear-gradient(45deg,#fff 0,#fff 2.1px,#f2f2f5 2.1px,#f2f2f5 2.83px);"></div>
<span class="t" style="top:424px;font-size:11px;line-height:16px;color:#8a8a8a;left:360.0px;">0</span>
<div style="left:403px;top:421px;width:64px;height:22px;background:repeating-linear-gradient(45deg,#fff 0,#fff 2.1px,#f2f2f5 2.1px,#f2f2f5 2.83px);"></div>
<span class="t" style="top:424px;font-size:11px;line-height:16px;color:#8a8a8a;left:425.0px;">0</span>
<span class="t" style="top:424px;font-size:11px;line-height:16px;color:#8a8a8a;left:520.4px;">6</span>
<div style="left:533px;top:421px;width:64px;height:22px;background:repeating-linear-gradient(45deg,#fff 0,#fff 2.1px,#f2f2f5 2.1px,#f2f2f5 2.83px);"></div>
<span class="t" style="top:424px;font-size:11px;line-height:16px;color:#8a8a8a;left:555.0px;">0</span>
<svg style="left:603px;top:426.2px;" width="13" height="12" viewBox="0 0 13 12"><rect x="0.5" y="0.5" width="12" height="10.8" fill="#fff" stroke="#3a3a3a" stroke-width="1"/><path d="M0 1.3 H13" stroke="#3a3a3a" stroke-width="2.2"/><path d="M0.5 5.2 H12.5 M0.5 8.2 H12.5 M4.4 1 V11 M8.6 1 V11" stroke="#3a3a3a" stroke-width="1.1"/></svg>
<span class="t" style="top:424px;font-size:11px;line-height:16px;color:#8a8a8a;letter-spacing:0.06px;left:620.5px;">ticket</span>
<span class="t" style="top:424px;font-size:11px;line-height:16px;color:#8a8a8a;letter-spacing:-0.35px;left:846.8px;transform:scaleX(0.987);transform-origin:0 50%;">0|0</span>
<span class="t" style="top:424px;font-size:11px;line-height:16px;color:#8a8a8a;letter-spacing:-0.35px;left:911.8px;transform:scaleX(0.991);transform-origin:0 50%;">dbo</span>
<div style="left:36px;top:246px;width:1px;height:92px;background:#cacbde;"></div>
<div style="left:118px;top:246px;width:1px;height:92px;background:#cacbde;"></div>
<div style="left:337px;top:246px;width:1px;height:92px;background:#cacbde;"></div>
<div style="left:402px;top:246px;width:1px;height:92px;background:#cacbde;"></div>
<div style="left:467px;top:246px;width:1px;height:92px;background:#cacbde;"></div>
<div style="left:532px;top:246px;width:1px;height:92px;background:#cacbde;"></div>
<div style="left:597px;top:246px;width:1px;height:92px;background:#cacbde;"></div>
<div style="left:840px;top:246px;width:1px;height:92px;background:#cacbde;"></div>
<div style="left:905px;top:246px;width:1px;height:92px;background:#cacbde;"></div>
<div style="left:36px;top:375px;width:1px;height:69px;background:#cacbde;"></div>
<div style="left:118px;top:375px;width:1px;height:69px;background:#cacbde;"></div>
<div style="left:337px;top:375px;width:1px;height:69px;background:#cacbde;"></div>
<div style="left:402px;top:375px;width:1px;height:69px;background:#cacbde;"></div>
<div style="left:467px;top:375px;width:1px;height:69px;background:#cacbde;"></div>
<div style="left:532px;top:375px;width:1px;height:69px;background:#cacbde;"></div>
<div style="left:597px;top:375px;width:1px;height:69px;background:#cacbde;"></div>
<div style="left:840px;top:375px;width:1px;height:69px;background:#cacbde;"></div>
<div style="left:905px;top:375px;width:1px;height:69px;background:#cacbde;"></div>
<svg style="left:18px;top:481px;" width="15" height="12" viewBox="0 0 15 12"><circle cx="10.7" cy="4.6" r="3.1" fill="none" stroke="#333" stroke-width="1.2"/><path d="M8.6 7 L5 10.6" stroke="#333" stroke-width="1.5"/><path d="M2 2.4 H6 M1 5.2 H5.4 M0 8.2 H4.2" stroke="#333" stroke-width="1"/></svg>
<svg style="left:43px;top:480px;" width="13" height="13" viewBox="0 0 13 13"><rect x="0.7" y="0.7" width="11.6" height="11.6" fill="#fff" stroke="#2a2a2a" stroke-width="1.3"/><rect x="1" y="1" width="4.2" height="11" fill="#2a2a2a"/><path d="M8.7 1 V12" stroke="#2a2a2a" stroke-width="1.2"/></svg>
<div style="left:61px;top:475px;width:24px;height:24px;background:#f1f1f5;border:1px solid #cacbde;"></div>
<svg style="left:66.5px;top:480px;" width="14" height="14" viewBox="0 0 14 14"><rect x="5.6" y="0.7" width="7.2" height="12.4" fill="#fff" stroke="#2a2a2a" stroke-width="1.2"/><path d="M6 4.8 H12.6 M6 9 H12.6" stroke="#2a2a2a" stroke-width="1.1"/><circle cx="2.6" cy="5.4" r="1.9" fill="#f5f5f5" stroke="#2a2a2a" stroke-width="1.1"/><path d="M2.6 7.4 V12.8 H5.6 M2.6 10.4 H4.4" stroke="#2a2a2a" stroke-width="1.1" fill="none"/></svg>
<svg style="left:91px;top:481px;" width="13" height="13" viewBox="0 0 13 13"><path d="M0.6 12 V0.6 H12" fill="none" stroke="#2a2a2a" stroke-width="1.3"/><path d="M12 1 V12 H1" fill="none" stroke="#2a2a2a" stroke-width="1" stroke-dasharray="1 1"/><path d="M0.8 11.8 L11.8 0.8" stroke="#2a2a2a" stroke-width="1.1"/></svg>
<svg style="left:114px;top:483.2px;" width="4" height="7" viewBox="0 0 4 7"><path d="M4 0 V7 L0.3 3.5 Z" fill="#2a2a2a"/></svg>
<svg style="left:127.7px;top:479px;" width="8.4" height="16" viewBox="0 0 8.4 16"><path d="M0.2 3.9 L4.2 0.2 L8.2 3.9 Z M0.2 12.1 L4.2 15.8 L8.2 12.1 Z" fill="#2a2a2a"/></svg>
<svg style="left:146px;top:483.2px;" width="4" height="7" viewBox="0 0 4 7"><path d="M0 0 V7 L3.7 3.5 Z" fill="#2a2a2a"/></svg>
<span class="t" style="top:479.5px;font-size:11px;line-height:16px;color:#333;letter-spacing:-0.35px;left:363.8px;transform:scaleX(0.929);transform-origin:0 50%;">SPECTATOR_QUERY</span>
<svg style="left:467px;top:480.5px;" width="14" height="14" viewBox="0 0 14 14"><g fill="none" stroke="#2a2a2a" stroke-width="1.05"><rect x="2.7" y="0.6" width="10.6" height="10"/><rect x="0.7" y="3.7" width="10.6" height="10"/></g><path d="M2.2 1.2 H13.8 M0.2 4.3 H11.8" stroke="#2a2a2a" stroke-width="1.9"/><path d="M4.4 7.5 H9.8" stroke="#2a2a2a" stroke-width="1"/></svg>
<div style="left:490.5px;top:482.5px;width:9px;height:9px;background:#3c3c3c;border-radius:50%;"></div>
<div style="left:500.5px;top:482.5px;width:9px;height:9px;background:#3c3c3c;border-radius:50%;"></div>
<svg style="left:520px;top:481.7px;" width="13" height="12" viewBox="0 0 13 12"><rect x="0.5" y="0.5" width="12" height="10.8" fill="#fff" stroke="#3a3a3a" stroke-width="1"/><path d="M0 1.3 H13" stroke="#3a3a3a" stroke-width="2.2"/><path d="M0.5 5.2 H12.5 M0.5 8.2 H12.5 M4.4 1 V11 M8.6 1 V11" stroke="#3a3a3a" stroke-width="1.1"/></svg>
<span class="t" style="top:479.5px;font-size:11px;line-height:16px;color:#333;letter-spacing:0.03px;left:537.0px;">dbo.spectator</span>
<svg style="left:938px;top:481px;" width="13" height="12" viewBox="0 0 13 12"><rect x="0.6" y="0.6" width="11.8" height="10.8" fill="#fff" stroke="#3a3a3a" stroke-width="1.2"/><path d="M0 1.4 H13" stroke="#3a3a3a" stroke-width="2.6"/><path d="M6.5 2 V11.4" stroke="#3a3a3a" stroke-width="1.2"/><path d="M2.2 4.6 H5 M2.2 6.6 H5 M2.2 8.6 H5 M8 4.6 H10.8 M8 6.6 H10.8 M8 8.6 H10.8" stroke="#3a3a3a" stroke-width="1"/></svg>
<svg style="left:972px;top:486px;" width="6" height="4" viewBox="0 0 6 4"><path d="M0 0 H6 L3 3.2 Z" fill="#444"/></svg>
<div style="left:11px;top:531px;width:978px;height:184px;background:#fff;border:1px solid #cacbde;"></div>
<div style="left:11px;top:503px;width:69px;height:29px;background:#eeeef2;border:1px solid #cacbde;"></div>
<div style="left:79px;top:503px;width:154px;height:29px;background:#eeeef2;border:1px solid #cacbde;"></div>
<div style="left:362px;top:503px;width:153px;height:29px;background:#eeeef2;border:1px solid #cacbde;"></div>
<div style="left:514px;top:503px;width:126px;height:29px;background:#eeeef2;border:1px solid #cacbde;"></div>
<div style="left:639px;top:503px;width:151px;height:29px;background:#eeeef2;border:1px solid #cacbde;"></div>
<div style="left:232px;top:502px;width:131px;height:30px;background:#f5f5f5;border:1px solid #cacbde;border-bottom:none;"></div>
<span class="t" style="top:509.3px;font-size:12px;line-height:16px;color:#333;letter-spacing:-0.35px;left:22.8px;transform:scaleX(0.830);transform-origin:0 50%;">All</span>
<div style="left:53.599999999999994px;top:510.09999999999997px;width:15.4px;height:15.4px;background:#e0e0e4;border-radius:8px;"></div>
<span class="t" style="top:510.1px;font-size:9.5px;line-height:16px;color:#333;left:58.7px;">6</span>
<div style="left:94.1px;top:513.4px;width:7.8px;height:7.8px;background:#3c3c3c;border-radius:50%;"></div>
<div style="left:104px;top:513.3px;width:8px;height:8px;background:#fafafa;border:1px solid #4a4a4a;border-radius:50%;"></div>
<span class="t" style="top:509.3px;font-size:12px;line-height:16px;color:#333;letter-spacing:-0.35px;left:117.5px;transform:scaleX(0.928);transform-origin:0 50%;">Only in Source</span>
<div style="left:206.10000000000002px;top:510.09999999999997px;width:15.4px;height:15.4px;background:#e0e0e4;border-radius:8px;"></div>
<span class="t" style="top:510.1px;font-size:9.5px;line-height:16px;color:#333;left:211.2px;">0</span>
<div style="left:247.0px;top:512.5px;width:8.6px;height:8.6px;background:#3c3c3c;border-radius:50%;"></div>
<div style="left:256.7px;top:512.5px;width:8.6px;height:8.6px;background:#3c3c3c;border-radius:50%;"></div>
<span class="t" style="top:509.3px;font-size:12px;line-height:16px;color:#0b76d0;letter-spacing:-0.24px;left:270.5px;">Different</span>
<div style="left:335.3px;top:509.79999999999995px;width:16px;height:16px;background:#0279cd;border-radius:8px;"></div>
<span class="t" style="top:510.1px;font-size:10px;line-height:16px;color:#fff;left:340.5px;">4</span>
<div style="left:375.8px;top:513.3px;width:8px;height:8px;background:#fafafa;border:1px solid #4a4a4a;border-radius:50%;"></div>
<div style="left:386.40000000000003px;top:513.4px;width:7.8px;height:7.8px;background:#3c3c3c;border-radius:50%;"></div>
<span class="t" style="top:509.3px;font-size:12px;line-height:16px;color:#333;letter-spacing:-0.35px;left:399.5px;transform:scaleX(0.982);transform-origin:0 50%;">Only in Target</span>
<div style="left:487.3px;top:510.09999999999997px;width:15.4px;height:15.4px;background:#e0e0e4;border-radius:8px;"></div>
<span class="t" style="top:510.1px;font-size:9.5px;line-height:16px;color:#333;left:492.4px;">0</span>
<div style="left:528px;top:513.3px;width:8px;height:8px;background:#fafafa;border:1px solid #4a4a4a;border-radius:50%;"></div>
<div style="left:538.2px;top:513.3px;width:8px;height:8px;background:#fafafa;border:1px solid #4a4a4a;border-radius:50%;"></div>
<span class="t" style="top:509.3px;font-size:12px;line-height:16px;color:#333;letter-spacing:-0.35px;left:551.8px;transform:scaleX(0.959);transform-origin:0 50%;">Identical</span>
<div style="left:612.8px;top:510.09999999999997px;width:15.4px;height:15.4px;background:#e0e0e4;border-radius:8px;"></div>
<span class="t" style="top:510.1px;font-size:9.5px;line-height:16px;color:#333;left:617.9px;">2</span>
<span class="t" style="top:509.3px;font-size:12px;line-height:16px;color:#333;letter-spacing:-0.35px;left:649.5px;transform:scaleX(0.936);transform-origin:0 50%;">Conflict Records</span>
<div style="left:750.5px;top:510.09999999999997px;width:28px;height:15.4px;background:#e0e0e4;border-radius:8px;"></div>
<span class="t" style="top:510.1px;font-size:9.5px;line-height:16px;color:#333;letter-spacing:0.60px;left:753.5px;transform:scaleX(1.061);transform-origin:0 50%;">0 | 0</span>
<div style="left:12px;top:532px;width:976px;height:35px;background:#f5f5f5;"></div>
<div style="left:12px;top:567px;width:976px;height:1px;background:#cacbde;"></div>
<div style="left:169px;top:532px;width:9px;height:36px;background:#fff;"></div>
<div style="left:178px;top:532px;width:102px;height:35px;background:#ececf0;"></div>
<svg style="left:274px;top:532px;" width="12" height="35" viewBox="0 0 12 35"><path d="M0 0 H6 L11 17.5 L6 35 H0 Z" fill="#ececf0"/><path d="M6 0 L11 17.5 L6 35" fill="none" stroke="#cacbde" stroke-width="1"/></svg>
<div style="left:36px;top:532px;width:1px;height:36px;background:#cacbde;"></div>
<div style="left:72px;top:532px;width:1px;height:36px;background:#cacbde;"></div>
<div style="left:101px;top:532px;width:1px;height:36px;background:#cacbde;"></div>
<div style="left:167px;top:532px;width:1px;height:36px;background:#cacbde;"></div>
<div style="left:168px;top:532px;width:1px;height:36px;background:#cacbde;"></div>
<div style="left:178px;top:532px;width:1px;height:36px;background:#cacbde;"></div>
<div style="left:381px;top:532px;width:1px;height:36px;background:#cacbde;"></div>
<div style="left:47px;top:542px;width:16px;height:16px;background:#fff;border:1px solid #cacbde;"></div>
<svg style="left:50px;top:546px;" width="10" height="9" viewBox="0 0 10 9"><path d="M1.2 4.3 L4.1 7.3 L8.9 0.4" fill="none" stroke="#1a1a1a" stroke-width="1.15"/></svg>
<svg style="left:110px;top:545.5px;" width="13" height="7" viewBox="0 0 13 7"><circle cx="9.6" cy="3" r="2" fill="none" stroke="#222" stroke-width="1.3"/><path d="M0.2 3 H7.6 M1.4 3 V5.8 M3.8 3 V5.4" stroke="#222" stroke-width="1.3"/></svg>
<span class="t" style="top:535.7px;font-size:11px;line-height:16px;color:#333;letter-spacing:-0.35px;left:127.0px;transform:scaleX(0.907);transform-origin:0 50%;">SID</span>
<span class="t" style="top:548.5px;font-size:10px;line-height:16px;color:#9a9aa2;letter-spacing:-0.24px;left:127.0px;">decimal</span>
<span class="t" style="top:535.7px;font-size:11px;line-height:16px;color:#333;letter-spacing:-0.35px;left:211.9px;transform:scaleX(0.880);transform-origin:0 50%;">SNAME</span>
<span class="t" style="top:548.5px;font-size:10px;line-height:16px;color:#9a9aa2;letter-spacing:0.14px;left:212.4px;">varchar</span>
<span class="t" style="top:535.7px;font-size:11px;line-height:16px;color:#333;letter-spacing:-0.35px;left:314.8px;transform:scaleX(0.964);transform-origin:0 50%;">sname</span>
<span class="t" style="top:548.5px;font-size:10px;line-height:16px;color:#9a9aa2;letter-spacing:0.14px;left:313.9px;">varchar</span>
<div style="left:178px;top:568px;width:203px;height:22px;background:#e4edf5;"></div>
<div style="left:36px;top:590px;width:132px;height:1px;background:#cacbde;"></div>
<div style="left:178px;top:590px;width:204px;height:1px;background:#cacbde;"></div>
<div style="left:47px;top:571px;width:16px;height:16px;background:#fff;border:1px solid #cacbde;"></div>
<svg style="left:50px;top:575px;" width="10" height="9" viewBox="0 0 10 9"><path d="M1.2 4.3 L4.1 7.3 L8.9 0.4" fill="none" stroke="#1a1a1a" stroke-width="1.15"/></svg>
<div style="left:78.19999999999999px;top:574.9px;width:8.8px;height:8.8px;background:#3c3c3c;border-radius:50%;"></div>
<div style="left:87.8px;top:574.9px;width:8.8px;height:8.8px;background:#3c3c3c;border-radius:50%;"></div>
<span class="t" style="top:571px;font-size:11px;line-height:16px;color:#1e1e1e;left:108.0px;">3</span>
<span class="t" style="top:571px;font-size:11px;line-height:16px;color:#1e1e1e;letter-spacing:-0.28px;left:204.8px;">Daniel Chernis</span>
<span class="t" style="top:571px;font-size:11px;line-height:16px;color:#1e1e1e;letter-spacing:-0.35px;left:285.5px;transform:scaleX(0.980);transform-origin:0 50%;">Paul Wu</span>
<div style="left:178px;top:591px;width:203px;height:22px;background:#e1f1fa;"></div>
<div style="left:36px;top:613px;width:132px;height:1px;background:#cacbde;"></div>
<div style="left:178px;top:613px;width:204px;height:1px;background:#cacbde;"></div>
<div style="left:47px;top:594px;width:16px;height:16px;background:#fff;border:1px solid #cacbde;"></div>
<svg style="left:50px;top:598px;" width="10" height="9" viewBox="0 0 10 9"><path d="M1.2 4.3 L4.1 7.3 L8.9 0.4" fill="none" stroke="#1a1a1a" stroke-width="1.15"/></svg>
<div style="left:78.19999999999999px;top:597.9px;width:8.8px;height:8.8px;background:#3c3c3c;border-radius:50%;"></div>
<div style="left:87.8px;top:597.9px;width:8.8px;height:8.8px;background:#3c3c3c;border-radius:50%;"></div>
<span class="t" style="top:594px;font-size:11px;line-height:16px;color:#1e1e1e;left:108.0px;">4</span>
<span class="t" style="top:594px;font-size:11px;line-height:16px;color:#1e1e1e;letter-spacing:-0.35px;left:234.8px;transform:scaleX(0.980);transform-origin:0 50%;">Paul Wu</span>
<span class="t" style="top:594px;font-size:11px;line-height:16px;color:#1e1e1e;letter-spacing:-0.28px;left:285.5px;">Daniel Chernis</span>
<div style="left:178px;top:614px;width:203px;height:22px;background:#e1f1fa;"></div>
<div style="left:36px;top:636px;width:132px;height:1px;background:#cacbde;"></div>
<div style="left:178px;top:636px;width:204px;height:1px;background:#cacbde;"></div>
<div style="left:47px;top:617px;width:16px;height:16px;background:#fff;border:1px solid #cacbde;"></div>
<svg style="left:50px;top:621px;" width="10" height="9" viewBox="0 0 10 9"><path d="M1.2 4.3 L4.1 7.3 L8.9 0.4" fill="none" stroke="#1a1a1a" stroke-width="1.15"/></svg>
<div style="left:78.19999999999999px;top:620.9px;width:8.8px;height:8.8px;background:#3c3c3c;border-radius:50%;"></div>
<div style="left:87.8px;top:620.9px;width:8.8px;height:8.8px;background:#3c3c3c;border-radius:50%;"></div>
<span class="t" style="top:617px;font-size:11px;line-height:16px;color:#1e1e1e;left:108.0px;">5</span>
<span class="t" style="top:617px;font-size:11px;line-height:16px;color:#1e1e1e;letter-spacing:-0.35px;left:207.8px;transform:scaleX(0.991);transform-origin:0 50%;">Joseph DSilva</span>
<span class="t" style="top:617px;font-size:11px;line-height:16px;color:#1e1e1e;letter-spacing:-0.05px;left:285.5px;">Tony Stark</span>
<div style="left:178px;top:637px;width:203px;height:22px;background:#e1f1fa;"></div>
<div style="left:36px;top:659px;width:132px;height:1px;background:#cacbde;"></div>
<div style="left:178px;top:659px;width:204px;height:1px;background:#cacbde;"></div>
<div style="left:47px;top:640px;width:16px;height:16px;background:#fff;border:1px solid #cacbde;"></div>
<svg style="left:50px;top:644px;" width="10" height="9" viewBox="0 0 10 9"><path d="M1.2 4.3 L4.1 7.3 L8.9 0.4" fill="none" stroke="#1a1a1a" stroke-width="1.15"/></svg>
<div style="left:78.19999999999999px;top:643.9px;width:8.8px;height:8.8px;background:#3c3c3c;border-radius:50%;"></div>
<div style="left:87.8px;top:643.9px;width:8.8px;height:8.8px;background:#3c3c3c;border-radius:50%;"></div>
<span class="t" style="top:640px;font-size:11px;line-height:16px;color:#1e1e1e;left:108.0px;">6</span>
<span class="t" style="top:640px;font-size:11px;line-height:16px;color:#1e1e1e;letter-spacing:-0.05px;left:221.8px;">Tony Stark</span>
<span class="t" style="top:640px;font-size:11px;line-height:16px;color:#1e1e1e;letter-spacing:-0.35px;left:285.5px;transform:scaleX(0.991);transform-origin:0 50%;">Joseph DSilva</span>
<div style="left:36px;top:568px;width:1px;height:92px;background:#cacbde;"></div>
<div style="left:72px;top:568px;width:1px;height:92px;background:#cacbde;"></div>
<div style="left:101px;top:568px;width:1px;height:92px;background:#cacbde;"></div>
<div style="left:167px;top:568px;width:1px;height:92px;background:#cacbde;"></div>
<div style="left:168px;top:568px;width:1px;height:92px;background:#cacbde;"></div>
<div style="left:178px;top:568px;width:1px;height:92px;background:#cacbde;"></div>
<div style="left:279px;top:568px;width:1px;height:92px;background:#cacbde;"></div>
<div style="left:381px;top:568px;width:1px;height:92px;background:#cacbde;"></div>
<svg style="left:18.5px;top:574.5px;" width="10" height="9" viewBox="0 0 10 9"><path d="M0.4 4.5 H8.6 M5.2 0.8 L8.9 4.5 L5.2 8.2" fill="none" stroke="#0279cd" stroke-width="1.1"/></svg>
<div style="left:12px;top:668px;width:976px;height:1px;background:#cacbde;"></div>
<span class="t" style="top:677px;font-size:11px;line-height:16px;color:#333;letter-spacing:-0.34px;left:102.5px;">Changes</span>
<span class="t" style="top:677px;font-size:11px;line-height:16px;color:#333;letter-spacing:-0.35px;left:244.0px;transform:scaleX(0.969);transform-origin:0 50%;">SNAME : 4</span>
<div style="left:153px;top:697px;width:835px;height:17px;background:#f5f5f5;"></div>
<svg style="left:15px;top:702px;" width="10" height="6" viewBox="0 0 10 6"><path d="M0.6 0 V6.4" stroke="#8a8a8a" stroke-width="1.2"/><path d="M5.2 0 V6.4 L2 3.2 Z M9.2 0 V6.4 L6 3.2 Z" fill="#8a8a8a"/></svg>
<svg style="left:35px;top:702px;" width="4" height="6" viewBox="0 0 4 6"><path d="M3.7 0 V6.4 L0.5 3.2 Z" fill="#8a8a8a"/></svg>
<span class="t" style="top:697.5px;font-size:11.5px;line-height:16px;color:#222;letter-spacing:-0.35px;left:51.2px;transform:scaleX(0.992);transform-origin:0 50%;">Record 1 of 4</span>
<svg style="left:127.5px;top:702px;" width="4" height="6" viewBox="0 0 4 6"><path d="M0.3 0 V6.4 L3.5 3.2 Z" fill="#333"/></svg>
<svg style="left:141px;top:702px;" width="10" height="6" viewBox="0 0 10 6"><path d="M9 0 V6.4" stroke="#333" stroke-width="1.1"/><path d="M0.4 0 V6.4 L3.6 3.2 Z M4.4 0 V6.4 L7.6 3.2 Z" fill="#333"/></svg>
<svg style="left:159px;top:702px;" width="5" height="7" viewBox="0 0 5 7"><path d="M4.4 0 V7 L0.6 3.5 Z" fill="#c4c4cc"/></svg>
<svg style="left:975.5px;top:702px;" width="5" height="7" viewBox="0 0 5 7"><path d="M0.6 0 V7 L4.4 3.5 Z" fill="#c4c4cc"/></svg>
<span class="t" style="top:732.3px;font-size:11.5px;line-height:16px;color:#333;letter-spacing:-0.35px;left:15.2px;transform:scaleX(0.967);transform-origin:0 50%;">Ready</span>
<span class="t" style="top:732.3px;font-size:11.5px;line-height:16px;color:#333;letter-spacing:-0.35px;left:797.5px;transform:scaleX(0.984);transform-origin:0 50%;">Ln 2</span>
<span class="t" style="top:732.3px;font-size:11.5px;line-height:16px;color:#333;letter-spacing:-0.15px;left:831.5px;">Col 10</span>
<span class="t" style="top:732.3px;font-size:11.5px;line-height:16px;color:#333;letter-spacing:-0.27px;left:876.5px;">Ch 0</span>
<div style="left:986px;top:749px;width:2px;height:2px;background:#b8b8c4;"></div>
<div style="left:990px;top:749px;width:2px;height:2px;background:#b8b8c4;"></div>
<div style="left:994px;top:749px;width:2px;height:2px;background:#b8b8c4;"></div>
<div style="left:990px;top:745px;width:2px;height:2px;background:#b8b8c4;"></div>
<div style="left:994px;top:745px;width:2px;height:2px;background:#b8b8c4;"></div>
<div style="left:994px;top:741px;width:2px;height:2px;background:#b8b8c4;"></div>
</body></html>
